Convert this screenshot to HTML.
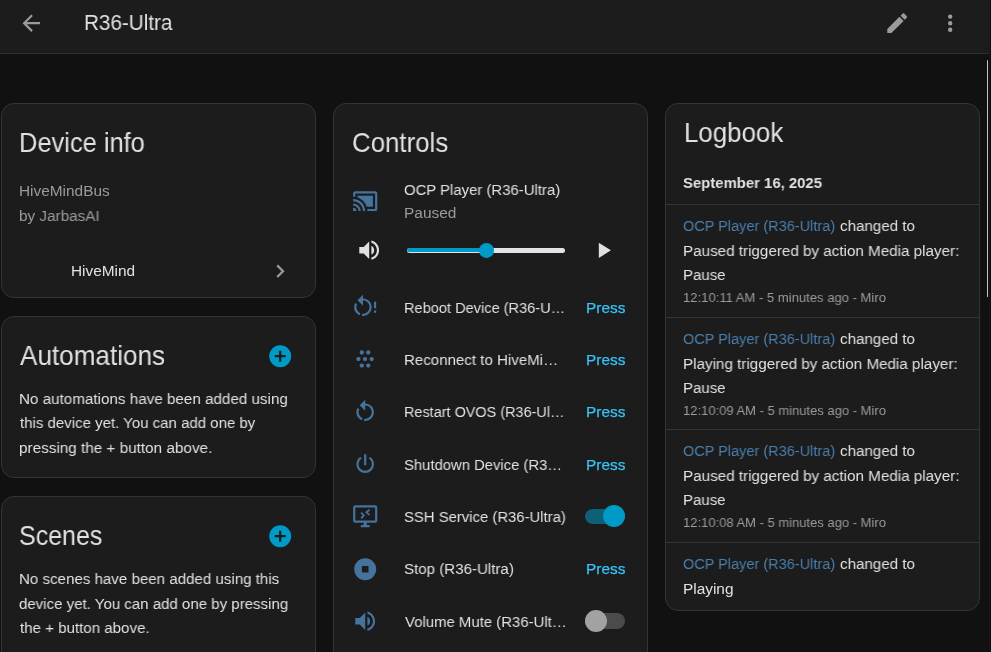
<!DOCTYPE html>
<html><head><meta charset="utf-8"><style>
html,body{margin:0;padding:0;width:991px;height:652px;overflow:hidden;background:#111111;font-family:"Liberation Sans", sans-serif;}
.t{position:absolute;white-space:nowrap;transform-origin:0 0;will-change:transform;}
.i{position:absolute;display:block;}
.r{position:absolute;}
</style></head><body>
<div class="r" style="left:0.00px;top:0.00px;width:990.00px;height:53.00px;background:#1c1c1c"></div>
<div class="r" style="left:0.00px;top:53.00px;width:989.00px;height:1.00px;background:#2f2f2f"></div>
<div class="r" style="left:989.00px;top:54.00px;width:1.00px;height:598.00px;background:#161616"></div>
<svg class="i" style="left:18.40px;top:9.80px;width:26.40px;height:26.40px;" viewBox="0 0 24 24"><path fill="#9b9b9b" d="M20,11V13H8L13.5,18.5L12.08,19.92L4.16,12L12.08,4.08L13.5,5.5L8,11H20Z"/></svg>
<div class="t" id="t0" style="left:84.04px;top:11.00px;font-size:22.66px;line-height:22.66px;color:#e1e1e1;font-weight:400;letter-spacing:0.000px;transform:scaleX(0.9128);">R36-Ultra</div>
<svg class="i" style="left:883.70px;top:9.70px;width:26.40px;height:26.40px;" viewBox="0 0 24 24"><path fill="#9b9b9b" d="M20.71,7.04C21.1,6.65 21.1,6 20.71,5.63L18.37,3.29C18,2.9 17.35,2.9 16.96,3.29L15.12,5.12L18.87,8.87M3,17.25V21H6.75L17.81,9.93L14.06,6.18L3,17.25Z"/></svg>
<svg class="i" style="left:936.80px;top:9.90px;width:26.40px;height:26.40px;" viewBox="0 0 24 24"><path fill="#9b9b9b" d="M12,16A2,2 0 0,1 14,18A2,2 0 0,1 12,20A2,2 0 0,1 10,18A2,2 0 0,1 12,16M12,10A2,2 0 0,1 14,12A2,2 0 0,1 12,14A2,2 0 0,1 10,12A2,2 0 0,1 12,10M12,4A2,2 0 0,1 14,6A2,2 0 0,1 12,8A2,2 0 0,1 10,6A2,2 0 0,1 12,4Z"/></svg>
<div class="r" style="left:1.00px;top:103.00px;width:315.00px;height:195.00px;background:#1c1c1c;border:1px solid #343434;border-radius:13px;box-sizing:border-box"></div>
<div class="r" style="left:1.00px;top:316.00px;width:315.00px;height:162.00px;background:#1c1c1c;border:1px solid #343434;border-radius:13px;box-sizing:border-box"></div>
<div class="r" style="left:1.00px;top:496.00px;width:315.00px;height:200.00px;background:#1c1c1c;border:1px solid #343434;border-radius:13px;box-sizing:border-box"></div>
<div class="r" style="left:333.00px;top:103.00px;width:315.00px;height:600.00px;background:#1c1c1c;border:1px solid #343434;border-radius:13px;box-sizing:border-box"></div>
<div class="r" style="left:665.00px;top:103.00px;width:315.00px;height:508.00px;background:#1c1c1c;border:1px solid #343434;border-radius:13px;box-sizing:border-box"></div>
<div class="t" id="t1" style="left:18.90px;top:129.00px;font-size:27.19px;line-height:27.19px;color:#e1e1e1;font-weight:400;letter-spacing:0.000px;transform:scaleX(0.9357);">Device info</div>
<div class="t" id="t2" style="left:18.74px;top:183.00px;font-size:15.40px;line-height:15.40px;color:#9b9b9b;font-weight:400;letter-spacing:0.000px;transform:scaleX(1.0000);">HiveMindBus</div>
<div class="t" id="t3" style="left:18.74px;top:208.00px;font-size:15.40px;line-height:15.40px;color:#9b9b9b;font-weight:400;letter-spacing:0.000px;transform:scaleX(0.9926);">by JarbasAI</div>
<div class="t" id="t4" style="left:71.30px;top:263.00px;font-size:15.40px;line-height:15.40px;color:#e1e1e1;font-weight:400;letter-spacing:0.000px;transform:scaleX(0.9972);">HiveMind</div>
<svg class="i" style="left:267.15px;top:257.80px;width:26.40px;height:26.40px;" viewBox="0 0 24 24"><path fill="#9b9b9b" d="M8.59,16.58L13.17,12L8.59,7.41L10,6L16,12L10,18L8.59,16.58Z"/></svg>
<div class="t" id="t5" style="left:20.44px;top:342.00px;font-size:27.19px;line-height:27.19px;color:#e1e1e1;font-weight:400;letter-spacing:0.000px;transform:scaleX(0.9600);">Automations</div>
<svg class="i" style="left:266.80px;top:342.80px;width:26.40px;height:26.40px;" viewBox="0 0 24 24"><path fill="#009ac7" d="M12,2A10,10 0 0,0 2,12A10,10 0 0,0 12,22A10,10 0 0,0 22,12A10,10 0 0,0 12,2M17,13H13V17H11V13H7V11H11V7H13V11H17V13Z"/></svg>
<div class="t" id="t6" style="left:19.24px;top:391.00px;font-size:15.40px;line-height:15.40px;color:#e1e1e1;font-weight:400;letter-spacing:0.000px;transform:scaleX(0.9882);">No automations have been added using</div>
<div class="t" id="t7" style="left:20.44px;top:415.00px;font-size:15.40px;line-height:15.40px;color:#e1e1e1;font-weight:400;letter-spacing:0.000px;transform:scaleX(0.9751);">this device yet. You can add one by</div>
<div class="t" id="t8" style="left:19.24px;top:440.00px;font-size:15.40px;line-height:15.40px;color:#e1e1e1;font-weight:400;letter-spacing:0.000px;transform:scaleX(0.9928);">pressing the + button above.</div>
<div class="t" id="t9" style="left:19.24px;top:522.00px;font-size:27.19px;line-height:27.19px;color:#e1e1e1;font-weight:400;letter-spacing:0.000px;transform:scaleX(0.9193);">Scenes</div>
<svg class="i" style="left:266.80px;top:522.50px;width:26.40px;height:26.40px;" viewBox="0 0 24 24"><path fill="#009ac7" d="M12,2A10,10 0 0,0 2,12A10,10 0 0,0 12,22A10,10 0 0,0 22,12A10,10 0 0,0 12,2M17,13H13V17H11V13H7V11H11V7H13V11H17V13Z"/></svg>
<div class="t" id="t10" style="left:19.24px;top:571.00px;font-size:15.40px;line-height:15.40px;color:#e1e1e1;font-weight:400;letter-spacing:0.000px;transform:scaleX(0.9811);">No scenes have been added using this</div>
<div class="t" id="t11" style="left:19.24px;top:596.00px;font-size:15.40px;line-height:15.40px;color:#e1e1e1;font-weight:400;letter-spacing:0.000px;transform:scaleX(0.9768);">device yet. You can add one by pressing</div>
<div class="t" id="t12" style="left:20.44px;top:620.00px;font-size:15.40px;line-height:15.40px;color:#e1e1e1;font-weight:400;letter-spacing:0.000px;transform:scaleX(0.9802);">the + button above.</div>
<div class="t" id="t13" style="left:351.52px;top:129.00px;font-size:27.19px;line-height:27.19px;color:#e1e1e1;font-weight:400;letter-spacing:0.000px;transform:scaleX(0.9501);">Controls</div>
<svg class="i" style="left:351.80px;top:187.60px;width:26.40px;height:26.40px;" viewBox="0 0 24 24"><path fill="#44739e" d="M21,3H3C1.89,3 1,3.89 1,5V8H3V5H21V19H14V21H21A2,2 0 0,0 23,19V5C23,3.89 22.1,3 21,3M1,10V12A9,9 0 0,1 10,21H12C12,14.92 7.07,10 1,10M19,7H5V8.63C8.96,9.91 12.09,13.04 13.37,17H19M1,14V16A5,5 0 0,1 6,21H8A7,7 0 0,0 1,14M1,18V21H4A3,3 0 0,0 1,18Z"/></svg>
<div class="t" id="t14" style="left:403.96px;top:182.00px;font-size:15.40px;line-height:15.40px;color:#e1e1e1;font-weight:400;letter-spacing:0.000px;transform:scaleX(0.9679);">OCP Player (R36-Ultra)</div>
<div class="t" id="t15" style="left:403.96px;top:205.00px;font-size:15.40px;line-height:15.40px;color:#9b9b9b;font-weight:400;letter-spacing:0.000px;transform:scaleX(1.0042);">Paused</div>
<svg class="i" style="left:355.60px;top:236.50px;width:26.40px;height:26.40px;" viewBox="0 0 24 24"><path fill="#e1e1e1" d="M14,3.23V5.29C16.89,6.15 19,8.83 19,12C19,15.17 16.89,17.84 14,18.7V20.77C18,19.86 21,16.28 21,12C21,7.72 18,4.14 14,3.23M16.5,12C16.5,10.23 15.5,8.71 14,7.97V16C15.5,15.29 16.5,13.76 16.5,12M3,9V15H7L12,20V4L7,9H3Z"/></svg>
<div class="r" style="left:407.00px;top:248.00px;width:158.00px;height:5.00px;background:#e6e0e9;border-radius:3px"></div>
<div class="r" style="left:407.00px;top:248.00px;width:80.00px;height:4.00px;background:#009ac7;border-radius:2px 0 0 2px"></div>
<div class="r" style="left:479.20px;top:243.00px;width:14.60px;height:14.60px;background:#009ac7;border-radius:50%"></div>
<svg class="i" style="left:589.60px;top:236.95px;width:26.40px;height:26.40px;" viewBox="0 0 24 24"><path fill="#e1e1e1" d="M8,5.14V19.14L19,12.14L8,5.14Z"/></svg>
<div class="t" id="t16" style="left:403.96px;top:300.00px;font-size:15.40px;line-height:15.40px;color:#e1e1e1;font-weight:400;letter-spacing:0.000px;transform:scaleX(0.9474);">Reboot Device (R36-U…</div>
<div class="t" id="t17" style="left:586.40px;top:300.00px;font-size:15.40px;line-height:15.40px;color:#38c2f8;font-weight:400;letter-spacing:0.000px;transform:scaleX(0.9901);-webkit-text-stroke:0.25px #38c2f8">Press</div>
<svg class="i" style="left:351.70px;top:294.10px;width:26.4px;height:26.4px" viewBox="0 0 24 24"><path fill="#44739e" transform="translate(-2,0)" d="M12,4C14.1,4 16.1,4.8 17.6,6.3C20.7,9.4 20.7,14.5 17.6,17.6C15.8,19.5 13.3,20.2 10.9,19.9L11.4,17.9C13.1,18.1 14.9,17.5 16.2,16.2C18.5,13.9 18.5,10.1 16.2,7.7C15.1,6.6 13.5,6 12,6V10.6L7,5.6L12,0.6V4M6.3,17.6C3.7,15 3.3,11 5.1,7.9L6.6,9.4C5.5,11.6 5.9,14.4 7.8,16.2C8.3,16.7 8.9,17.1 9.6,17.4L9,19.4C8,19 7.1,18.4 6.3,17.6Z"/><path fill="#44739e" d="M20,7H22V13H20V7M20,15H22V17H20V15Z"/></svg>
<div class="t" id="t18" style="left:403.96px;top:352.00px;font-size:15.40px;line-height:15.40px;color:#e1e1e1;font-weight:400;letter-spacing:0.000px;transform:scaleX(0.9794);">Reconnect to HiveMi…</div>
<div class="t" id="t19" style="left:586.40px;top:352.00px;font-size:15.40px;line-height:15.40px;color:#38c2f8;font-weight:400;letter-spacing:0.000px;transform:scaleX(0.9901);-webkit-text-stroke:0.25px #38c2f8">Press</div>
<svg class="i" style="left:345px;top:340px;width:40px;height:40px" viewBox="345 340 40 40"><circle cx="361.80" cy="352.50" r="2.15" fill="#44739e"/><circle cx="368.30" cy="352.50" r="2.15" fill="#44739e"/><circle cx="358.40" cy="359.10" r="2.15" fill="#44739e"/><circle cx="365.00" cy="359.10" r="2.15" fill="#44739e"/><circle cx="371.70" cy="359.10" r="2.15" fill="#44739e"/><circle cx="361.80" cy="365.60" r="2.15" fill="#44739e"/><circle cx="368.30" cy="365.60" r="2.15" fill="#44739e"/></svg>
<div class="t" id="t20" style="left:403.96px;top:404.00px;font-size:15.40px;line-height:15.40px;color:#e1e1e1;font-weight:400;letter-spacing:0.000px;transform:scaleX(0.9381);">Restart OVOS (R36-Ul…</div>
<div class="t" id="t21" style="left:586.40px;top:404.00px;font-size:15.40px;line-height:15.40px;color:#38c2f8;font-weight:400;letter-spacing:0.000px;transform:scaleX(0.9901);-webkit-text-stroke:0.25px #38c2f8">Press</div>
<svg class="i" style="left:351.70px;top:398.76px;width:26.40px;height:26.40px;" viewBox="0 0 24 24"><path fill="#44739e" d="M12,4C14.1,4 16.1,4.8 17.6,6.3C20.7,9.4 20.7,14.5 17.6,17.6C15.8,19.5 13.3,20.2 10.9,19.9L11.4,17.9C13.1,18.1 14.9,17.5 16.2,16.2C18.5,13.9 18.5,10.1 16.2,7.7C15.1,6.6 13.5,6 12,6V10.6L7,5.6L12,0.6V4M6.3,17.6C3.7,15 3.3,11 5.1,7.9L6.6,9.4C5.5,11.6 5.9,14.4 7.8,16.2C8.3,16.7 8.9,17.1 9.6,17.4L9,19.4C8,19 7.1,18.4 6.3,17.6Z"/></svg>
<div class="t" id="t22" style="left:403.96px;top:457.00px;font-size:15.40px;line-height:15.40px;color:#e1e1e1;font-weight:400;letter-spacing:0.000px;transform:scaleX(0.9630);">Shutdown Device (R3…</div>
<div class="t" id="t23" style="left:586.40px;top:457.00px;font-size:15.40px;line-height:15.40px;color:#38c2f8;font-weight:400;letter-spacing:0.000px;transform:scaleX(0.9901);-webkit-text-stroke:0.25px #38c2f8">Press</div>
<svg class="i" style="left:351.70px;top:451.09px;width:26.40px;height:26.40px;" viewBox="0 0 24 24"><path fill="#44739e" d="M16.56,5.44L15.11,6.89C16.84,7.94 18,9.83 18,12A6,6 0 0,1 12,18A6,6 0 0,1 6,12C6,9.83 7.16,7.94 8.88,6.88L7.44,5.44C5.36,6.88 4,9.28 4,12A8,8 0 0,0 12,20A8,8 0 0,0 20,12C20,9.28 18.64,6.88 16.56,5.44M13,3H11V13H13"/></svg>
<div class="t" id="t24" style="left:403.96px;top:509.00px;font-size:15.40px;line-height:15.40px;color:#e1e1e1;font-weight:400;letter-spacing:0.000px;transform:scaleX(0.9654);">SSH Service (R36-Ultra)</div>
<svg class="i" style="left:351.70px;top:503.42px;width:26.4px;height:26.4px" viewBox="0 0 24 24"><path fill="#44739e" d="M3,2A2,2 0 0,0 1,4V16A2,2 0 0,0 3,18H10.6V20H8V22H16V20H13.4V18H21A2,2 0 0,0 23,16V4A2,2 0 0,0 21,2H3M3,4H21V16H3V4Z"/><path fill="none" stroke="#44739e" stroke-width="1.6" d="M8.3,8.7L10.8,11.3L8.3,14M16,6.1L13,8.5L16,10.8"/></svg>
<div class="r" style="left:585.00px;top:508.52px;width:39.60px;height:15.40px;background:rgb(13,96,120);border-radius:8px"></div>
<div class="r" style="left:603.00px;top:505.22px;width:22.00px;height:22.00px;background:#009ac7;border-radius:50%"></div>
<div class="t" id="t25" style="left:403.96px;top:561.00px;font-size:15.40px;line-height:15.40px;color:#e1e1e1;font-weight:400;letter-spacing:0.000px;transform:scaleX(0.9806);">Stop (R36-Ultra)</div>
<div class="t" id="t26" style="left:586.40px;top:561.00px;font-size:15.40px;line-height:15.40px;color:#38c2f8;font-weight:400;letter-spacing:0.000px;transform:scaleX(0.9901);-webkit-text-stroke:0.25px #38c2f8">Press</div>
<svg class="i" style="left:351.70px;top:555.75px;width:26.40px;height:26.40px;" viewBox="0 0 24 24"><path fill="#44739e" d="M12,2A10,10 0 0,0 2,12A10,10 0 0,0 12,22A10,10 0 0,0 22,12A10,10 0 0,0 12,2M9,9H15V15H9"/></svg>
<div class="t" id="t27" style="left:404.56px;top:614.00px;font-size:15.40px;line-height:15.40px;color:#e1e1e1;font-weight:400;letter-spacing:0.000px;transform:scaleX(0.9697);">Volume Mute (R36-Ult…</div>
<svg class="i" style="left:351.70px;top:608.08px;width:26.40px;height:26.40px;" viewBox="0 0 24 24"><path fill="#44739e" d="M14,3.23V5.29C16.89,6.15 19,8.83 19,12C19,15.17 16.89,17.84 14,18.7V20.77C18,19.86 21,16.28 21,12C21,7.72 18,4.14 14,3.23M16.5,12C16.5,10.23 15.5,8.71 14,7.97V16C15.5,15.29 16.5,13.76 16.5,12M3,9V15H7L12,20V4L7,9H3Z"/></svg>
<div class="r" style="left:585.00px;top:613.18px;width:39.60px;height:15.40px;background:#4b4b4b;border-radius:8px"></div>
<div class="r" style="left:585.00px;top:609.88px;width:22.00px;height:22.00px;background:#a2a2a2;border-radius:50%"></div>
<div class="t" id="t28" style="left:683.54px;top:119.00px;font-size:27.19px;line-height:27.19px;color:#e1e1e1;font-weight:400;letter-spacing:0.000px;transform:scaleX(0.9516);">Logbook</div>
<div class="t" id="t29" style="left:683.40px;top:175.00px;font-size:15.40px;line-height:15.40px;color:#e1e1e1;font-weight:700;letter-spacing:0.000px;transform:scaleX(0.9669);">September 16, 2025</div>
<div class="r" style="left:666.00px;top:204.00px;width:313.00px;height:1.00px;background:#343434"></div>
<div class="t" id="t30" style="left:683.02px;top:218.00px;font-size:15.40px;line-height:15.40px;color:#4a7fb0;font-weight:400;letter-spacing:0.000px;transform:scaleX(0.9428);">OCP Player (R36-Ultra)</div>
<div class="t" id="t31" style="left:840.40px;top:218.00px;font-size:15.40px;line-height:15.40px;color:#e1e1e1;font-weight:400;letter-spacing:0.000px;transform:scaleX(0.9847);">changed to</div>
<div class="t" id="t32" style="left:683.40px;top:243.00px;font-size:15.40px;line-height:15.40px;color:#e1e1e1;font-weight:400;letter-spacing:0.000px;transform:scaleX(0.9878);">Paused triggered by action Media player:</div>
<div class="t" id="t33" style="left:683.40px;top:267.00px;font-size:15.40px;line-height:15.40px;color:#e1e1e1;font-weight:400;letter-spacing:0.000px;transform:scaleX(0.9762);">Pause</div>
<div class="t" id="t34" style="left:683.30px;top:291.00px;font-size:13.20px;line-height:13.20px;color:#9b9b9b;font-weight:400;letter-spacing:0.000px;transform:scaleX(0.9902);">12:10:11 AM - 5 minutes ago - Miro</div>
<div class="r" style="left:666.00px;top:317.00px;width:313.00px;height:1.00px;background:#343434"></div>
<div class="t" id="t35" style="left:683.02px;top:331.00px;font-size:15.40px;line-height:15.40px;color:#4a7fb0;font-weight:400;letter-spacing:0.000px;transform:scaleX(0.9428);">OCP Player (R36-Ultra)</div>
<div class="t" id="t36" style="left:840.40px;top:331.00px;font-size:15.40px;line-height:15.40px;color:#e1e1e1;font-weight:400;letter-spacing:0.000px;transform:scaleX(0.9847);">changed to</div>
<div class="t" id="t37" style="left:683.40px;top:356.00px;font-size:15.40px;line-height:15.40px;color:#e1e1e1;font-weight:400;letter-spacing:0.000px;transform:scaleX(0.9877);">Playing triggered by action Media player:</div>
<div class="t" id="t38" style="left:683.40px;top:380.00px;font-size:15.40px;line-height:15.40px;color:#e1e1e1;font-weight:400;letter-spacing:0.000px;transform:scaleX(0.9762);">Pause</div>
<div class="t" id="t39" style="left:683.30px;top:404.00px;font-size:13.20px;line-height:13.20px;color:#9b9b9b;font-weight:400;letter-spacing:0.000px;transform:scaleX(0.9854);">12:10:09 AM - 5 minutes ago - Miro</div>
<div class="r" style="left:666.00px;top:429.00px;width:313.00px;height:1.00px;background:#343434"></div>
<div class="t" id="t40" style="left:683.02px;top:443.00px;font-size:15.40px;line-height:15.40px;color:#4a7fb0;font-weight:400;letter-spacing:0.000px;transform:scaleX(0.9428);">OCP Player (R36-Ultra)</div>
<div class="t" id="t41" style="left:840.40px;top:443.00px;font-size:15.40px;line-height:15.40px;color:#e1e1e1;font-weight:400;letter-spacing:0.000px;transform:scaleX(0.9847);">changed to</div>
<div class="t" id="t42" style="left:683.40px;top:468.00px;font-size:15.40px;line-height:15.40px;color:#e1e1e1;font-weight:400;letter-spacing:0.000px;transform:scaleX(0.9885);">Paused triggered by action Media player:</div>
<div class="t" id="t43" style="left:683.40px;top:492.00px;font-size:15.40px;line-height:15.40px;color:#e1e1e1;font-weight:400;letter-spacing:0.000px;transform:scaleX(0.9762);">Pause</div>
<div class="t" id="t44" style="left:683.30px;top:516.00px;font-size:13.20px;line-height:13.20px;color:#9b9b9b;font-weight:400;letter-spacing:0.000px;transform:scaleX(0.9854);">12:10:08 AM - 5 minutes ago - Miro</div>
<div class="r" style="left:666.00px;top:542.00px;width:313.00px;height:1.00px;background:#343434"></div>
<div class="t" id="t45" style="left:683.02px;top:556.00px;font-size:15.40px;line-height:15.40px;color:#4a7fb0;font-weight:400;letter-spacing:0.000px;transform:scaleX(0.9428);">OCP Player (R36-Ultra)</div>
<div class="t" id="t46" style="left:840.40px;top:556.00px;font-size:15.40px;line-height:15.40px;color:#e1e1e1;font-weight:400;letter-spacing:0.000px;transform:scaleX(0.9847);">changed to</div>
<div class="t" id="t47" style="left:683.40px;top:581.00px;font-size:15.40px;line-height:15.40px;color:#e1e1e1;font-weight:400;letter-spacing:0.000px;transform:scaleX(0.9923);">Playing</div>
<div class="r" style="left:986.90px;top:59.80px;width:1.50px;height:237.20px;background:#c4c4c4;border-radius:1px"></div>
<div class="r" style="left:990.00px;top:0.00px;width:1.00px;height:652.00px;background:#0b0b26"></div>
</body></html>
